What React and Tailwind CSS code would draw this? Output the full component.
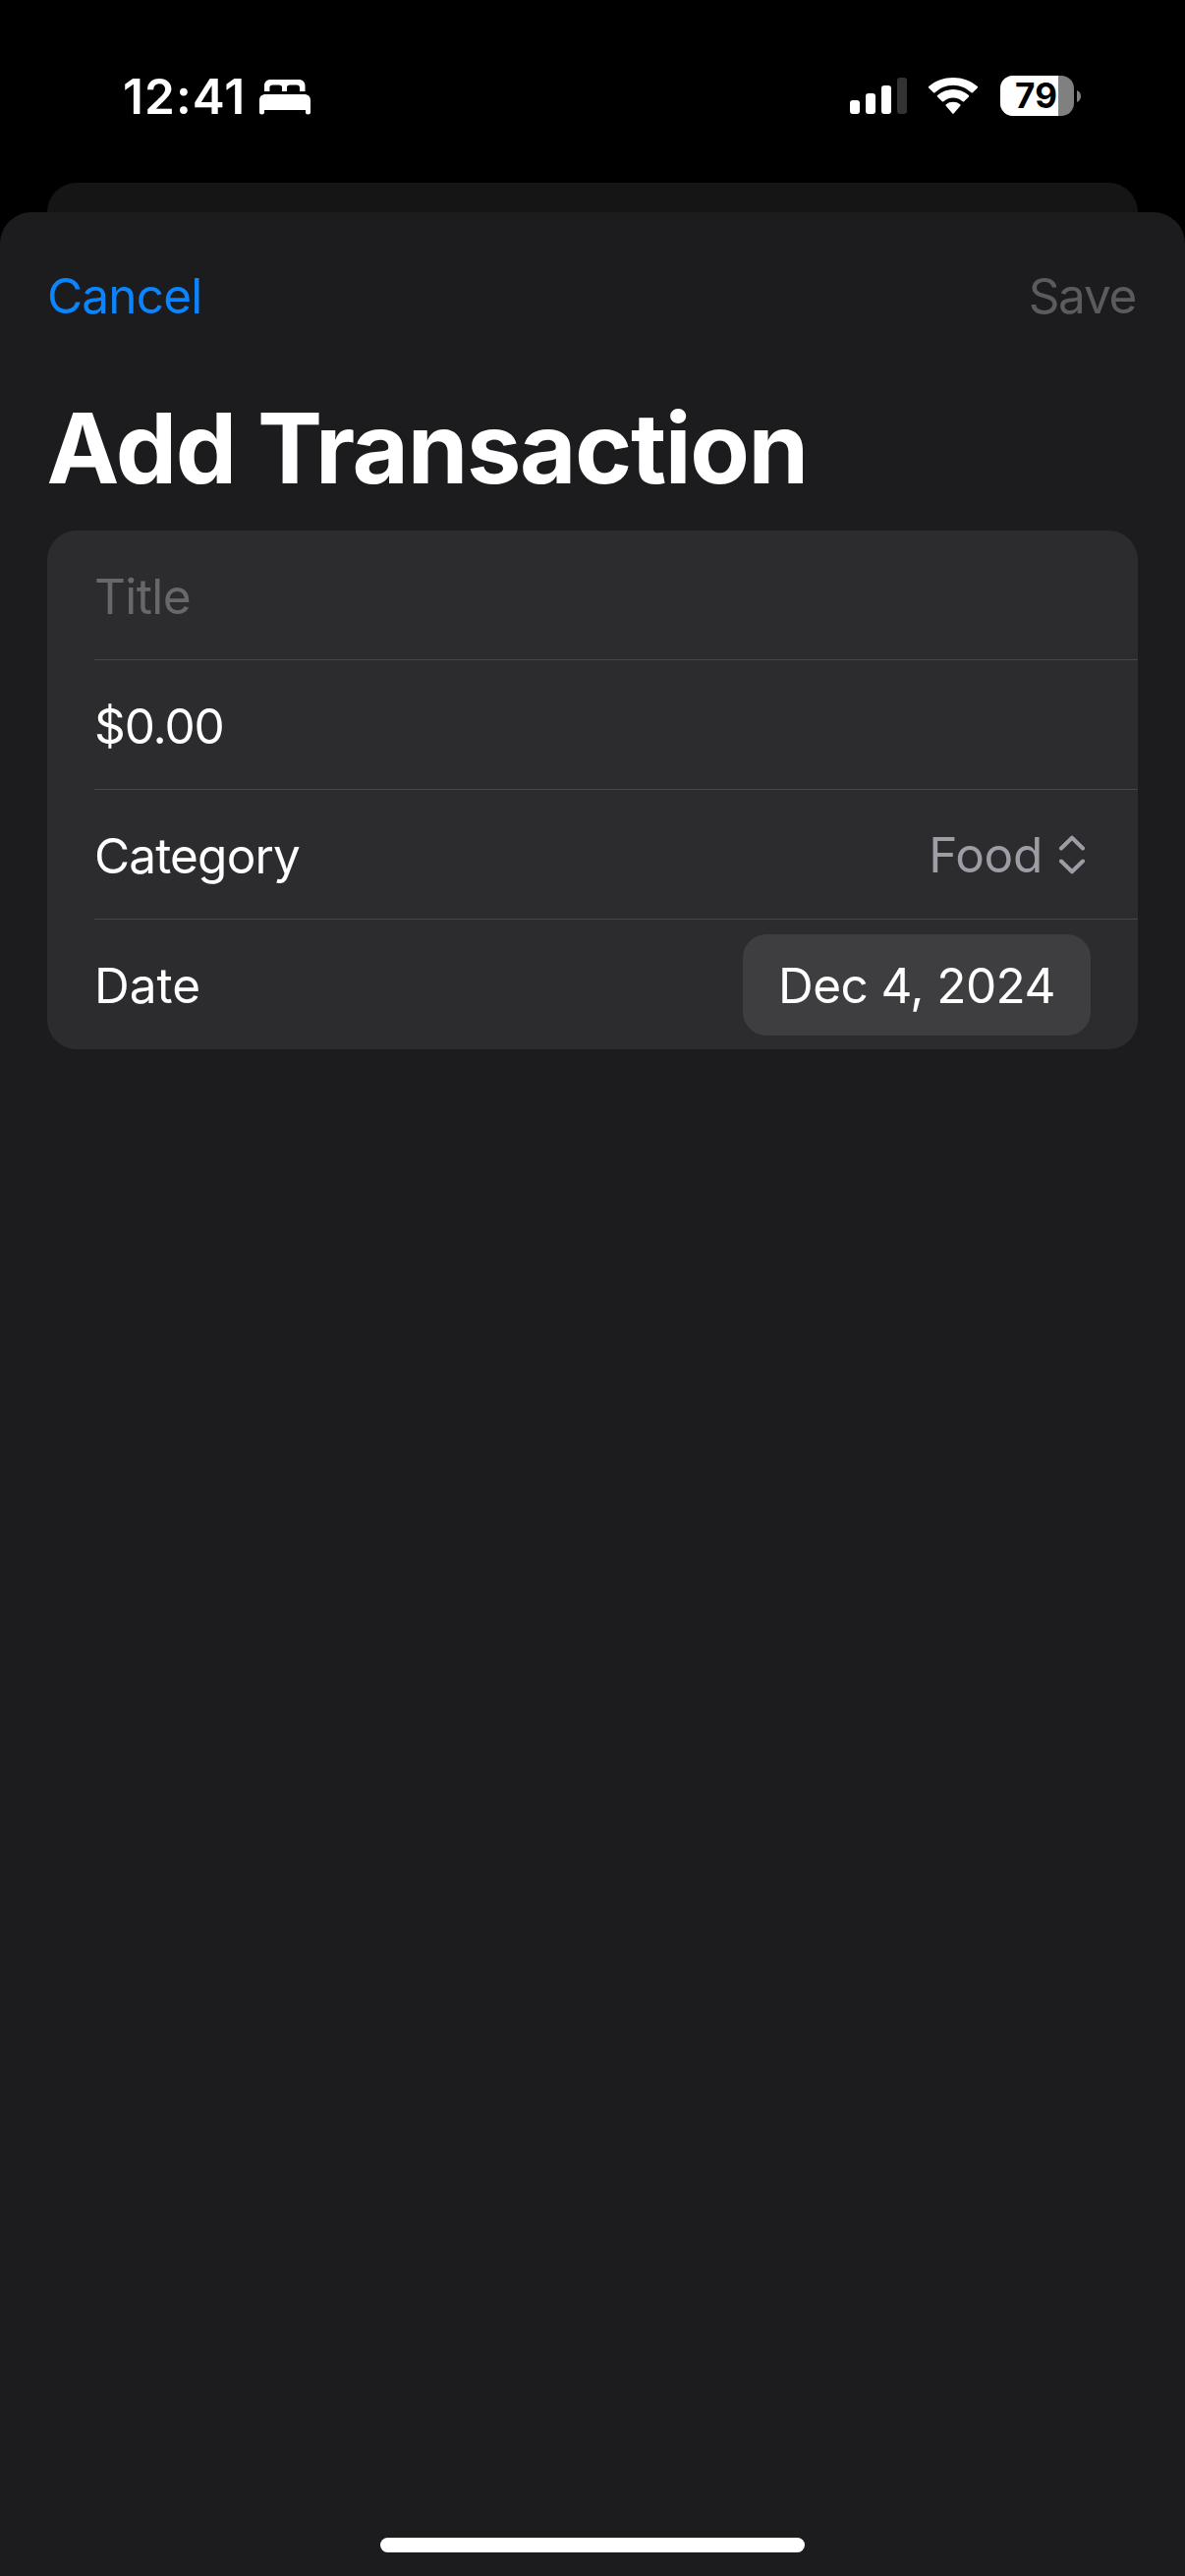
function BedIcon() {
  return (
    <svg width="52" height="36" viewBox="0 0 52 36" fill="#fff">
      <path d="M5 12V6.5C5 2.6 7.4 0 11.500 0H40C44 0 46.500 2.600 46.500 6.500V12H41V8.200C41 6.500 40 5.400 38.200 5.400H31C29 5.400 28 6.500 28 8V12H23V8C23 6.500 22 5.400 20 5.400H13.500C11.500 5.400 10.400 6.500 10.400 8.200V12Z" />
      <path d="M0 21C0 17.200 2.500 15 6.500 15H45.500C49.500 15 52 17.200 52 21V33.500C52 34.800 51 35.500 49.500 35.500C48 35.500 47 34.800 47 33.500V31H5V33.500C5 34.800 4 35.500 2.500 35.500C1 35.500 0 34.800 0 33.500Z" />
    </svg>
  );
}

function SignalIcon() {
  return (
    <svg width="58" height="37" viewBox="0 0 58 37" fill="#fff">
      <rect x="0" y="23" width="10" height="14" rx="3" />
      <rect x="16" y="16" width="10" height="21" rx="3" />
      <rect x="32" y="8" width="10" height="29" rx="3" />
      <rect x="48" y="0" width="10" height="37" rx="3" fill="#333" />
    </svg>
  );
}

function WifiIcon() {
  return (
    <svg width="52" height="38" viewBox="0 0 52 38" fill="#fff">
      <path d="M26 7.700C33 7.700 39.600 10.500 44.500 15.300C44.900 15.700 45.500 15.700 45.900 15.300L50.800 10.400C51.200 10 51.200 9.400 50.800 9C37 -3 15 -3 1.200 9C0.800 9.400 0.800 10 1.200 10.400L6.100 15.300C6.500 15.700 7.100 15.700 7.500 15.300C12.400 10.500 19 7.700 26 7.700Z" />
      <path d="M26 20.500C29.700 20.500 33.100 21.900 35.700 24.300C36.100 24.700 36.700 24.700 37.100 24.300L42 19.400C42.400 19 42.400 18.400 42 18C33 9.900 19 9.900 10 18C9.600 18.400 9.600 19 10 19.400L14.900 24.300C15.300 24.700 15.900 24.700 16.300 24.300C18.900 21.900 22.300 20.500 26 20.500Z" />
      <path d="M33.300 28.700C33.700 28.300 33.700 27.700 33.200 27.300C29.100 24 22.900 24 18.800 27.300C18.300 27.700 18.300 28.300 18.700 28.700L25.300 36.500C25.700 36.900 26.300 36.900 26.700 36.500Z" />
    </svg>
  );
}

function Battery() {
  return (
    <div className="flex items-center">
      <div className="flex h-[41px] w-[75px] items-center overflow-hidden rounded-[13px] bg-[#808080]">
        <div className="flex h-full w-[59px] items-center bg-white pl-[15px] text-[35px] leading-[41px] font-bold tracking-[0.3px] text-black">
          79
        </div>
      </div>
      <svg className="ml-[3px]" width="4" height="12" viewBox="0 0 4 12" fill="#808080">
        <path d="M0 0C2.500 1 4 3.300 4 6C4 8.700 2.500 11 0 12Z" />
      </svg>
    </div>
  );
}

function StatusBar() {
  return (
    <div className="flex h-[186px] items-start justify-between pr-[106px] pl-[125px]">
      <div className="flex pt-[68px]">
        <div className="w-[139px] text-[49.5px] leading-[60px] font-semibold tracking-[1.1px]">12:41</div>
        <div className="pt-[13px]">
          <BedIcon />
        </div>
      </div>
      <div className="flex items-start pt-[77px]">
        <div className="pt-0.5">
          <SignalIcon />
        </div>
        <div className="ml-[21px] pt-0.5">
          <WifiIcon />
        </div>
        <div className="ml-[22px]">
          <Battery />
        </div>
      </div>
    </div>
  );
}

function ChevronUpDown() {
  return (
    <svg
      width="28"
      height="40"
      viewBox="0 0 28 40"
      fill="none"
      stroke="#9d9da5"
      strokeWidth="4"
      strokeLinecap="round"
      strokeLinejoin="round"
    >
      <path d="M3 13.500L14 2.700L25 13.500" />
      <path d="M3 26.500L14 37.300L25 26.500" />
    </svg>
  );
}

function Divider() {
  return <div className="ml-12 h-px bg-[#464649]" />;
}

export default function App() {
  return (
    <div className="flex h-[2622px] w-[1206px] flex-col overflow-hidden bg-black font-['Inter',sans-serif] text-white">
      <StatusBar />
      <div className="mx-12 h-[30px] rounded-t-[30px] bg-[#151515]" />
      <main className="flex flex-1 flex-col rounded-t-[32px] bg-[#1c1c1e]">
        <div className="flex justify-between pt-[55px] pr-[50px] pl-12 text-[49.5px] leading-[60px]">
          <button className="tracking-[-0.8px] text-[#0a84ff]">Cancel</button>
          <button className="tracking-[-1.3px] text-[#5b5b5f]">Save</button>
        </div>
        <h1 className="pt-[65px] pl-[47.5px] text-[99px] leading-[120px] font-bold tracking-[-1.38px]">
          Add Transaction
        </h1>
        <section className="mx-12 mt-[24px] h-[528px] overflow-hidden rounded-[30px] bg-[#2c2c2e] text-[49.5px] leading-[60px]">
          <div className="flex h-[131px] items-center pt-[3px] pl-12 tracking-[-0.6px] text-[#67676c]">
            Title
          </div>
          <Divider />
          <div className="flex h-[131px] items-center pt-[3px] pl-12 tracking-[-1.1px]">$0.00</div>
          <Divider />
          <div className="flex h-[131px] items-center justify-between pt-[3px] pr-[53px] pl-12">
            <span className="tracking-[-0.85px]">Category</span>
            <div className="-mt-0.5 flex items-center gap-4 text-[#9d9da5]">
              <span className="tracking-[-0.3px]">Food</span>
              <ChevronUpDown />
            </div>
          </div>
          <Divider />
          <div className="flex h-[132px] items-center justify-between pr-12 pl-12">
            <span className="pt-0.5">Date</span>
            <div className="mt-px h-[103px] w-[354px] rounded-[24px] bg-[#3e3e40] pt-[22px] pl-9 tracking-[-0.57px]">
              Dec 4, 2024
            </div>
          </div>
        </section>
        <div className="mx-auto mt-auto mb-6 h-[15px] w-[432px] rounded-full bg-white" />
      </main>
    </div>
  );
}
